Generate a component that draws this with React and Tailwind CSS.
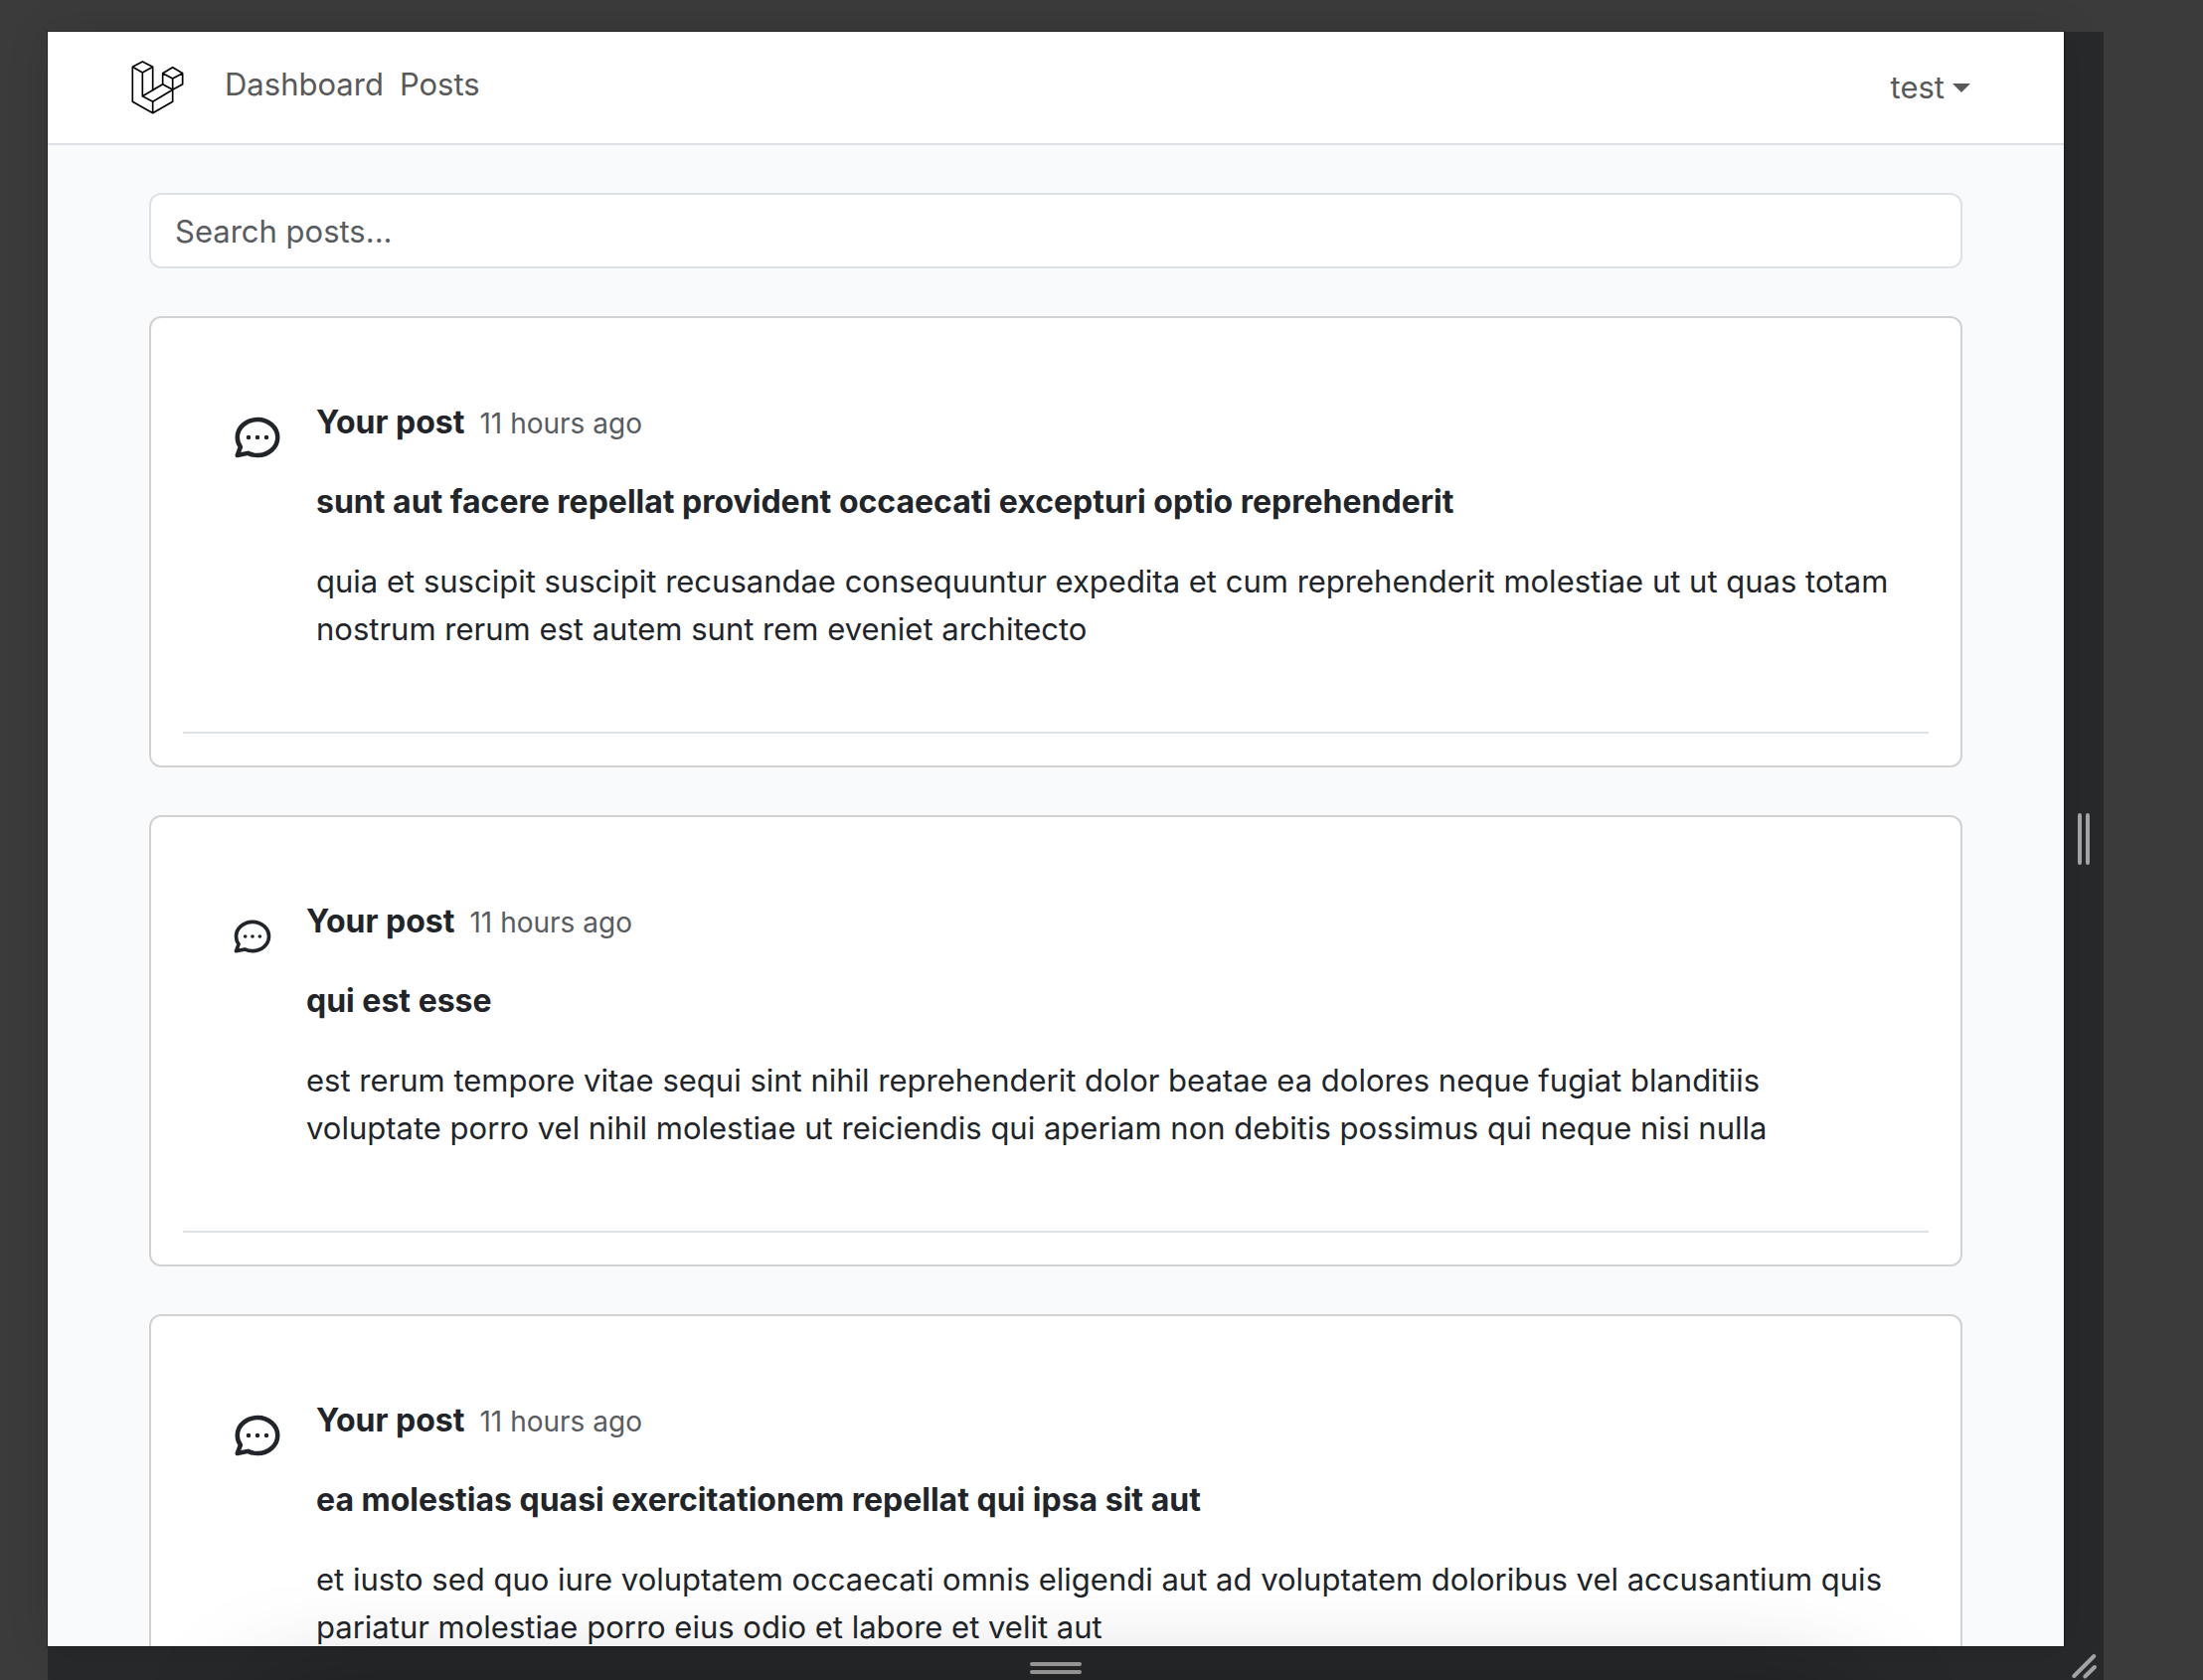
import React from "react";

const posts = [
  {
    title: "sunt aut facere repellat provident occaecati excepturi optio reprehenderit",
    body: "quia et suscipit suscipit recusandae consequuntur expedita et cum reprehenderit molestiae ut ut quas totam\nnostrum rerum est autem sunt rem eveniet architecto",
    icon: "w-[54px]",
  },
  {
    title: "qui est esse",
    body: "est rerum tempore vitae sequi sint nihil reprehenderit dolor beatae ea dolores neque fugiat blanditiis\nvoluptate porro vel nihil molestiae ut reiciendis qui aperiam non debitis possimus qui neque nisi nulla",
    icon: "w-11",
  },
  {
    title: "ea molestias quasi exercitationem repellat qui ipsa sit aut",
    body: "et iusto sed quo iure voluptatem occaecati omnis eligendi aut ad voluptatem doloribus vel accusantium quis\npariatur molestiae porro eius odio et labore et velit aut",
    icon: "w-[54px]",
  },
];

function Logo() {
  return (
    <svg viewBox="24 21 162 162" className="size-[54px] shrink-0" fill="none" stroke="#000" strokeWidth="5" strokeLinejoin="round" strokeLinecap="round" role="img" aria-label="Laravel">
      <path d="M28 40 58 24 89 40V111M28 40V145L89 179 149 145V75M28 40 58 57 89 40M58 57V128L89 145V179M58 128 119 92V59L149 41 179 59V92L149 109 89 145M119 92 149 109M119 59 149 75 179 59" />
    </svg>
  );
}

function ChatIcon({ size }) {
  return (
    <svg viewBox="0 0 24 24" className={"h-[78px] shrink-0 " + size} fill="none" stroke="currentColor" strokeWidth="2" strokeLinecap="round" strokeLinejoin="round" aria-hidden="true">
      <path d="M8 12h.01M12 12h.01M16 12h.01M21 12c0 4.418-4.03 8-9 8a9.863 9.863 0 01-4.255-.949L3 20l1.395-3.72C3.512 15.042 3 13.574 3 12c0-4.418 4.03-8 9-8s9 3.582 9 8z" />
    </svg>
  );
}

function Post({ post }) {
  return (
    <article className="rounded-xl border-2 border-[#d2d2d2] bg-white p-8">
      <div className="flex gap-8 border-b-2 border-[#dee2e6] pt-[49px] pr-9 pb-[79px] pl-12">
        <ChatIcon size={post.icon} />
        <div className="min-w-0 flex-1">
          <p className="text-[32px] leading-[48px]">
            <strong>Your post</strong> <small className="ml-1.5 text-[28px] leading-none text-[#595c5f]">11 hours ago</small>
          </p>
          <h2 className="mt-8 text-[32px] leading-[48px] font-bold">{post.title}</h2>
          <p className="mt-8 whitespace-pre-line">{post.body}</p>
        </div>
      </div>
    </article>
  );
}

export default function App() {
  return (
    <div className="relative h-screen overflow-hidden bg-[#3b3b3b] pt-8 pr-[100px] pl-12 font-['Inter',sans-serif] text-[31px] leading-[48px] text-[#212529]">
      <div className="grid h-full grid-cols-[1fr_40px] grid-rows-[1fr_34px] bg-[#28292b]">
        <div className="min-h-0 overflow-hidden bg-[#f8fafc] shadow-[0_0_40px_rgba(0,0,0,0.12),0_0_0_1px_rgba(0,0,0,0.3)]">
          <header className="flex h-[114px] items-center border-b-2 border-[#dee2e6] bg-white pr-[94px] pl-[84px] text-[#595959]">
            <Logo />
            <nav className="ml-10 flex gap-4 pb-1.5">
              <a href="#dashboard">Dashboard</a>
              <a href="#posts">Posts</a>
            </nav>
            <button type="button" className="ml-auto flex items-center gap-2">
              test
              <svg viewBox="0 0 18 9" className="h-[9px] w-[18px] shrink-0" fill="currentColor" aria-hidden="true">
                <path d="M0 0h18L9 9z" />
              </svg>
            </button>
          </header>
          <main className="flex flex-col gap-12 px-[102px] py-12">
            <input type="text" aria-label="Search posts" placeholder="Search posts..." className="h-[76px] w-full rounded-xl border-2 border-[#dee2e6] bg-white px-6 placeholder:text-[#595c5f]" />
            {posts.map((p) => (
              <Post key={p.title} post={p} />
            ))}
          </main>
        </div>
        <div className="flex items-center justify-center gap-1">
          <span className="h-[52px] w-1 rounded-full bg-[#a3a3a3]" />
          <span className="h-[52px] w-1 rounded-full bg-[#a3a3a3]" />
        </div>
        <div className="flex flex-col items-center gap-1 pt-4">
          <span className="h-1 w-[52px] rounded-full bg-[#a3a3a3]" />
          <span className="h-1 w-[52px] rounded-full bg-[#a3a3a3]" />
        </div>
        <svg viewBox="0 0 40 34" className="h-[34px] w-10" fill="none" stroke="#a3a3a3" strokeWidth="4" strokeLinecap="round" aria-hidden="true">
          <path d="M10.3 30 30.3 10M21.3 30.5 31 21" />
        </svg>
      </div>
      <div className="pointer-events-none absolute right-[366px] -bottom-[414px] left-[270px] h-96 shadow-[0_0_110px_rgba(0,0,0,0.4)]" />
    </div>
  );
}
